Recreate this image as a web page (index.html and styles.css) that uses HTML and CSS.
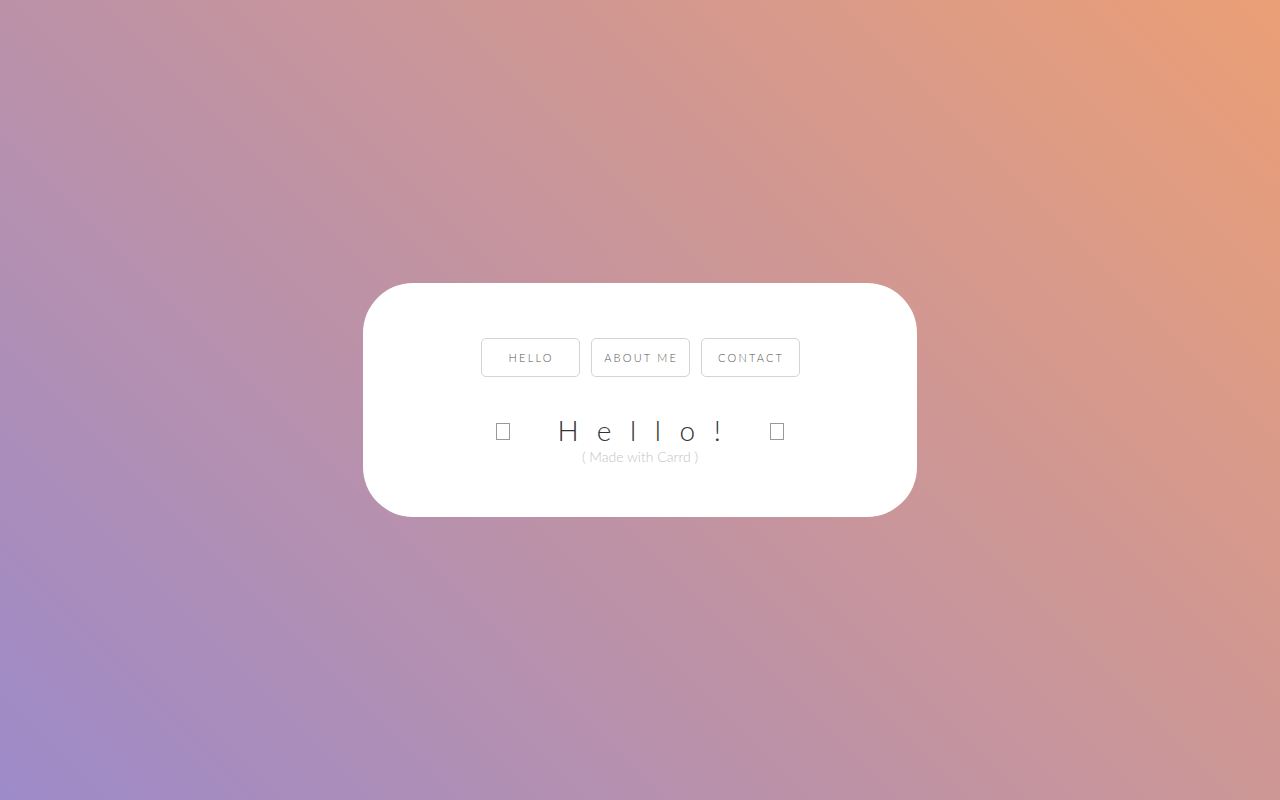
FILE: index.html
```html
<!DOCTYPE html>
<html lang="en">
<head>
<meta charset="utf-8">
<title>Hello</title>
<link rel="stylesheet" href="styles.css">
</head>
<body>
<main class="page">
  <section class="card">
    <nav class="buttons">
      <a class="btn" href="#">HELLO</a>
      <a class="btn" href="#">ABOUT ME</a>
      <a class="btn" href="#">CONTACT</a>
    </nav>
    <h1 class="title"><span class="tofu"></span><span class="word">Hello!</span><span class="tofu"></span></h1>
    <p class="sub">( Made with Carrd )</p>
  </section>
</main>
</body>
</html>
```

FILE: styles.css
```css
html, body {
  margin: 0;
  padding: 0;
  height: 100%;
}
body {
  background: linear-gradient(45deg, #9d8ac9 0%, #c4949f 50%, #eb9f76 100%);
  font-family: Lato, "Open Sans", sans-serif;
  font-weight: 300;
}
.page {
  min-height: 100vh;
  display: flex;
  align-items: center;
  justify-content: center;
}
.card {
  width: 554px;
  height: 234px;
  box-sizing: border-box;
  background: #fff;
  border-radius: 50px;
  padding-top: 55px;
  display: flex;
  flex-direction: column;
  align-items: center;
}
.buttons {
  display: flex;
  gap: 11px;
}
.btn {
  width: 99px;
  height: 39px;
  box-sizing: border-box;
  border: 1px solid #d4d4d4;
  border-radius: 5px;
  display: flex;
  align-items: center;
  justify-content: center;
  font-size: 11px;
  letter-spacing: 2.2px;
  padding-left: 2.2px;
  color: #555;
  text-decoration: none;
  font-weight: 300;
}
.title {
  margin: 37px 0 0;
  font-size: 28px;
  font-weight: 300;
  color: #333;
  line-height: 32px;
  height: 32px;
  display: flex;
  align-items: center;
}
.word {
  letter-spacing: 18.6px;
  margin-left: 47px;
  margin-right: 30px;
}
.tofu {
  display: inline-block;
  width: 14px;
  height: 17px;
  box-sizing: border-box;
  border: 1px solid #999;
  position: relative;
  top: 1px;
}
.sub {
  margin: 2px 0 0;
  font-size: 14px;
  color: #c4c4c4;
  line-height: 18px;
}
```
